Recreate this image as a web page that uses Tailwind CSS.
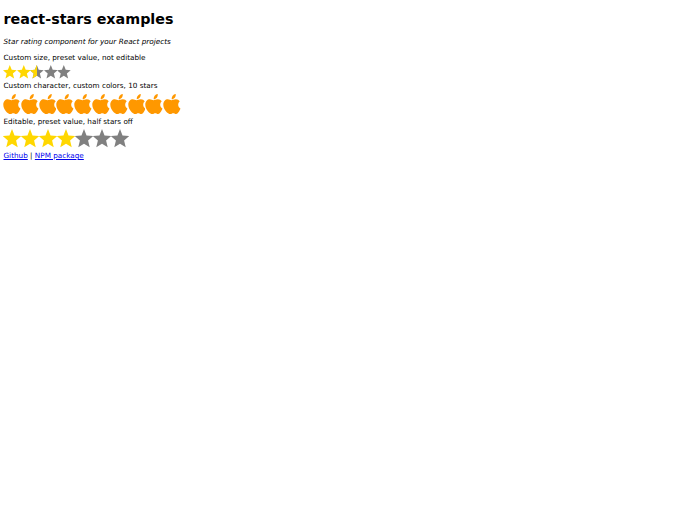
<!DOCTYPE html>
<html>
<head>
    <title>react-stars examples</title>
    <script src="https://cdn.jsdelivr.net/npm/@tailwindcss/browser@4"></script>
</head>
<body class="bg-white text-black font-['DejaVu_Sans',sans-serif] pl-[3.5px] w-[688px] h-[512px] overflow-hidden">
    <svg width="0" height="0" class="absolute">
        <defs>
            <path id="star" d="M12 1l3.100 7.500 8.100.6-6.200 5.200 2 7.900L12 18l-7 4.200 2-7.900L.8 9.100l8.100-.6z"/>
            <path id="apple" d="M11.800 6.400c-.4-3 1.800-6 5.400-6.400.4 3.400-2 6.200-5.400 6.400zM17.400 6.200c2.200 0 4 1 5.200 2.600-3 2.300-2.800 6.800.9 8.600-1 2.800-3.400 6.600-5.700 6.600-1.400 0-2.300-.9-3.900-.9-1.700 0-2.600.9-4 .9C6.600 24 .4 18.600.4 12.800c0-4.200 3-6.600 6-6.600 2 0 3.700 1.200 5.100 1.200 1.300 0 2.900-1.200 5.900-1.200z"/>
        </defs>
    </svg>

    <h1 class="text-[14.300px] leading-[21px] font-bold pt-[9px]">react-stars examples</h1>
    <p class="text-[7.250px] leading-[11px] italic mt-[6px]">Star rating component for your React projects</p>

    <p class="text-[7.250px] leading-[11px] mt-[5px]">Custom size, preset value, not editable</p>
    <div class="flex -ml-[0.500px] mt-[0.500px] h-[16px] items-center">
        <svg class="w-[13.600px] h-[14px] fill-[#ffd700]" viewBox="1 1 22 22" preserveAspectRatio="none"><use href="#star"/></svg>
        <svg class="w-[13.600px] h-[14px] fill-[#ffd700]" viewBox="1 1 22 22" preserveAspectRatio="none"><use href="#star"/></svg>
        <div class="relative w-[13.600px] h-[14px]">
            <svg class="w-full h-full fill-[#808080]" viewBox="1 1 22 22" preserveAspectRatio="none"><use href="#star"/></svg>
            <div class="absolute left-0 top-0 h-full w-1/2 overflow-hidden">
                <svg class="w-[13.600px] h-[14px] fill-[#ffd700]" viewBox="1 1 22 22" preserveAspectRatio="none"><use href="#star"/></svg>
            </div>
        </div>
        <svg class="w-[13.600px] h-[14px] fill-[#808080]" viewBox="1 1 22 22" preserveAspectRatio="none"><use href="#star"/></svg>
        <svg class="w-[13.600px] h-[14px] fill-[#808080]" viewBox="1 1 22 22" preserveAspectRatio="none"><use href="#star"/></svg>
    </div>

    <p class="text-[7.250px] leading-[11px] mt-[0.500px]">Custom character, custom colors, 10 stars</p>
    <div class="flex -ml-[0.500px] mt-[2.500px] h-[20px] items-center">
        <svg class="w-[17.800px] h-[20px] fill-[#ff9800]" viewBox="0 0 24 24" preserveAspectRatio="none"><use href="#apple"/></svg>
        <svg class="w-[17.800px] h-[20px] fill-[#ff9800]" viewBox="0 0 24 24" preserveAspectRatio="none"><use href="#apple"/></svg>
        <svg class="w-[17.800px] h-[20px] fill-[#ff9800]" viewBox="0 0 24 24" preserveAspectRatio="none"><use href="#apple"/></svg>
        <svg class="w-[17.800px] h-[20px] fill-[#ff9800]" viewBox="0 0 24 24" preserveAspectRatio="none"><use href="#apple"/></svg>
        <svg class="w-[17.800px] h-[20px] fill-[#ff9800]" viewBox="0 0 24 24" preserveAspectRatio="none"><use href="#apple"/></svg>
        <svg class="w-[17.800px] h-[20px] fill-[#ff9800]" viewBox="0 0 24 24" preserveAspectRatio="none"><use href="#apple"/></svg>
        <svg class="w-[17.800px] h-[20px] fill-[#ff9800]" viewBox="0 0 24 24" preserveAspectRatio="none"><use href="#apple"/></svg>
        <svg class="w-[17.800px] h-[20px] fill-[#ff9800]" viewBox="0 0 24 24" preserveAspectRatio="none"><use href="#apple"/></svg>
        <svg class="w-[17.800px] h-[20px] fill-[#ff9800]" viewBox="0 0 24 24" preserveAspectRatio="none"><use href="#apple"/></svg>
        <svg class="w-[17.800px] h-[20px] fill-[#ff9800]" viewBox="0 0 24 24" preserveAspectRatio="none"><use href="#apple"/></svg>
    </div>

    <p class="text-[7.250px] leading-[11px] mt-[2.500px]">Editable, preset value, half stars off</p>
    <div class="flex -ml-[0.500px] mt-[1.500px] h-[20px] items-center">
        <svg class="w-[18px] h-[19px] fill-[#ffd700]" viewBox="1 1 22 22" preserveAspectRatio="none"><use href="#star"/></svg>
        <svg class="w-[18px] h-[19px] fill-[#ffd700]" viewBox="1 1 22 22" preserveAspectRatio="none"><use href="#star"/></svg>
        <svg class="w-[18px] h-[19px] fill-[#ffd700]" viewBox="1 1 22 22" preserveAspectRatio="none"><use href="#star"/></svg>
        <svg class="w-[18px] h-[19px] fill-[#ffd700]" viewBox="1 1 22 22" preserveAspectRatio="none"><use href="#star"/></svg>
        <svg class="w-[18px] h-[19px] fill-[#808080]" viewBox="1 1 22 22" preserveAspectRatio="none"><use href="#star"/></svg>
        <svg class="w-[18px] h-[19px] fill-[#808080]" viewBox="1 1 22 22" preserveAspectRatio="none"><use href="#star"/></svg>
        <svg class="w-[18px] h-[19px] fill-[#808080]" viewBox="1 1 22 22" preserveAspectRatio="none"><use href="#star"/></svg>
    </div>

    <p class="text-[7.250px] leading-[11px] mt-[1.500px]">
        <a href="#" class="underline text-[#0000ee]">Github</a> | <a href="#" class="underline text-[#0000ee]">NPM package</a>
    </p>
</body>
</html>
